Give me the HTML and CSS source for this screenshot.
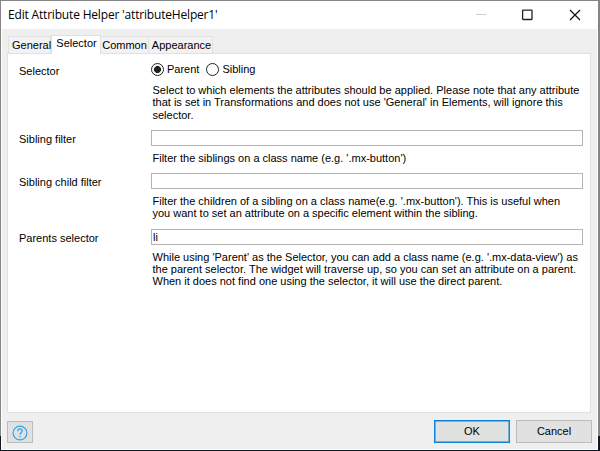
FILE: index.html
```html
<!DOCTYPE html>
<html lang="en">
<head>
<meta charset="utf-8">
<title>Edit Attribute Helper</title>
<link rel="stylesheet" href="styles.css">
</head>
<body>
<div class="window">
  <header class="titlebar">
    <h1 class="title">Edit Attribute Helper 'attributeHelper1'</h1>
    <svg class="controls" width="110" height="14" viewBox="0 0 110 14" fill="none">
      <path d="M1 6.5h10" stroke="#ccc"/>
      <rect x="47.6" y="2.1" width="9.4" height="9.4" rx=".5" stroke="#222" stroke-width="1.3"/>
      <path d="M95 2l10 10M105 2l-10 10" stroke="#111" stroke-width="1.2"/>
    </svg>
  </header>
  <main class="content">
    <nav class="tabs">
      <div class="tab general">General</div>
      <div class="tab active">Selector</div>
      <div class="tab common">Common</div>
      <div class="tab appearance">Appearance</div>
    </nav>
    <section class="panel">
      <div class="row row-radio">
        <label class="label">Selector</label>
        <div class="field">
          <div class="radios">
            <span class="radio checked"></span><span class="parent">Parent</span>
            <span class="radio"></span><span>Sibling</span>
          </div>
          <p class="help">Select to which elements the attributes should be applied. Please note that any attribute<br>that is set in Transformations and does not use 'General' in Elements, will ignore this<br>selector.</p>
        </div>
      </div>
      <div class="row row-sibling">
        <label class="label">Sibling filter</label>
        <div class="field">
          <div class="input"></div>
          <p class="help">Filter the siblings on a class name (e.g. '.mx-button')</p>
        </div>
      </div>
      <div class="row row-child">
        <label class="label">Sibling child filter</label>
        <div class="field">
          <div class="input"></div>
          <p class="help">Filter the children of a sibling on a class name(e.g. '.mx-button'). This is useful when<br>you want to set an attribute on a specific element within the sibling.</p>
        </div>
      </div>
      <div class="row">
        <label class="label">Parents selector</label>
        <div class="field">
          <div class="input">li</div>
          <p class="help">While using 'Parent' as the Selector, you can add a class name (e.g. '.mx-data-view') as<br>the parent selector. The widget will traverse up, so you can set an attribute on a parent.<br>When it does not find one using the selector, it will use the direct parent.</p>
        </div>
      </div>
    </section>
    <footer class="footer">
      <div class="button help-button">
        <svg class="help-icon" width="16" height="16" viewBox="0 0 16 16" fill="none" stroke="#2ba9e6" stroke-width="1.25">
          <circle cx="8" cy="8" r="6.9"/>
          <path d="M5.9 6.2c0-1.5 1-2.3 2.2-2.3s2.1.8 2.1 2c0 1.6-2.1 1.8-2.1 3.8"/>
          <path d="M8.1 10.8v1.4"/>
        </svg>
      </div>
      <div class="button ok">OK</div>
      <div class="button cancel">Cancel</div>
    </footer>
  </main>
</div>
</body>
</html>
```

FILE: styles.css
```css
* { box-sizing: border-box; }
body {
  margin: 0;
  width: 600px;
  height: 451px;
  overflow: hidden;
  background: linear-gradient(#858585 0 436px, #101520 436px);
  font: 11px/12.4px "Liberation Sans", Arial, sans-serif;
  color: #000;
}
.window {
  width: 597px;
  height: 448px;
  margin: 1px 0 0 1px;
  background: #fff;
  box-shadow: 0 1px #fff;
}
.titlebar {
  height: 28px;
  display: flex;
  align-items: center;
  justify-content: space-between;
  padding: 0 13px 0 7px;
}
.title {
  margin: 0;
  font: 12px/16px "Open Sans", sans-serif;
  letter-spacing: -.18px;
}
.content {
  height: 420px;
  margin: 0 1px;
  padding: 6px 5px 0 5px;
  background: #efefef;
}
.tabs {
  display: flex;
  align-items: flex-end;
  height: 18px;
  padding-left: 1px;
}
.tab {
  height: 17px;
  border: 1px solid #e0e0e0;
  border-bottom: 0;
  background: #f2f2f2;
  padding-top: 2px;
  text-align: center;
  white-space: nowrap;
}
.active {
  width: 50px;
  height: 19px;
  margin-bottom: -1px;
  padding-top: 1px;
  background: #fff;
}
.general { width: 43px; padding-left: 3px; }
.active { padding-left: 1px; }
.common { width: 48px; border-left: 0; }
.appearance { width: 64px; border-left: 0; padding-left: 2px; }
.panel {
  height: 360px;
  margin-right: 1px;
  border: 1px solid #e1e1e1;
  background: #fff;
  padding: 9px 8px 0 11px;
}
.row { display: flex; height: 43px; }
.row-radio { height: 67px; }
.row-child { height: 55.5px; }
.label { width: 132px; padding-top: 3px; flex: none; }
.row-radio .label { padding-top: 2px; }
.field { flex: 1; }
.radios { display: flex; align-items: center; height: 13px; }
.radio {
  width: 13px;
  height: 13px;
  margin-right: 3px;
  border: 1px solid #222;
  border-radius: 50%;
}
.checked { background: radial-gradient(#222 0 3.2px, #fff 3.8px); }
.parent { margin-right: 7px; }
.help { margin: 8px 0 0 1.5px; white-space: nowrap; }
.input {
  height: 16px;
  width: 432px;
  border: 1px solid #b3b3b3;
  padding: 1px 0 0 1px;
}
.input + .help { margin-top: 6px; }
.footer { display: flex; align-items: flex-start; padding-top: 7px; }
.button {
  display: flex;
  align-items: center;
  justify-content: center;
  height: 23px;
  width: 76px;
  border: 1px solid #bcbcbc;
  background: #e1e1e1;
}
.help-button { width: 26px; height: 22px; margin: 1px auto 0 0; }
.help-icon { margin-top: 2px; }
.ok { border: 1px solid #0c82dc; box-shadow: inset 0 0 0 .5px #0c82dc; margin-right: 6px; }
```
